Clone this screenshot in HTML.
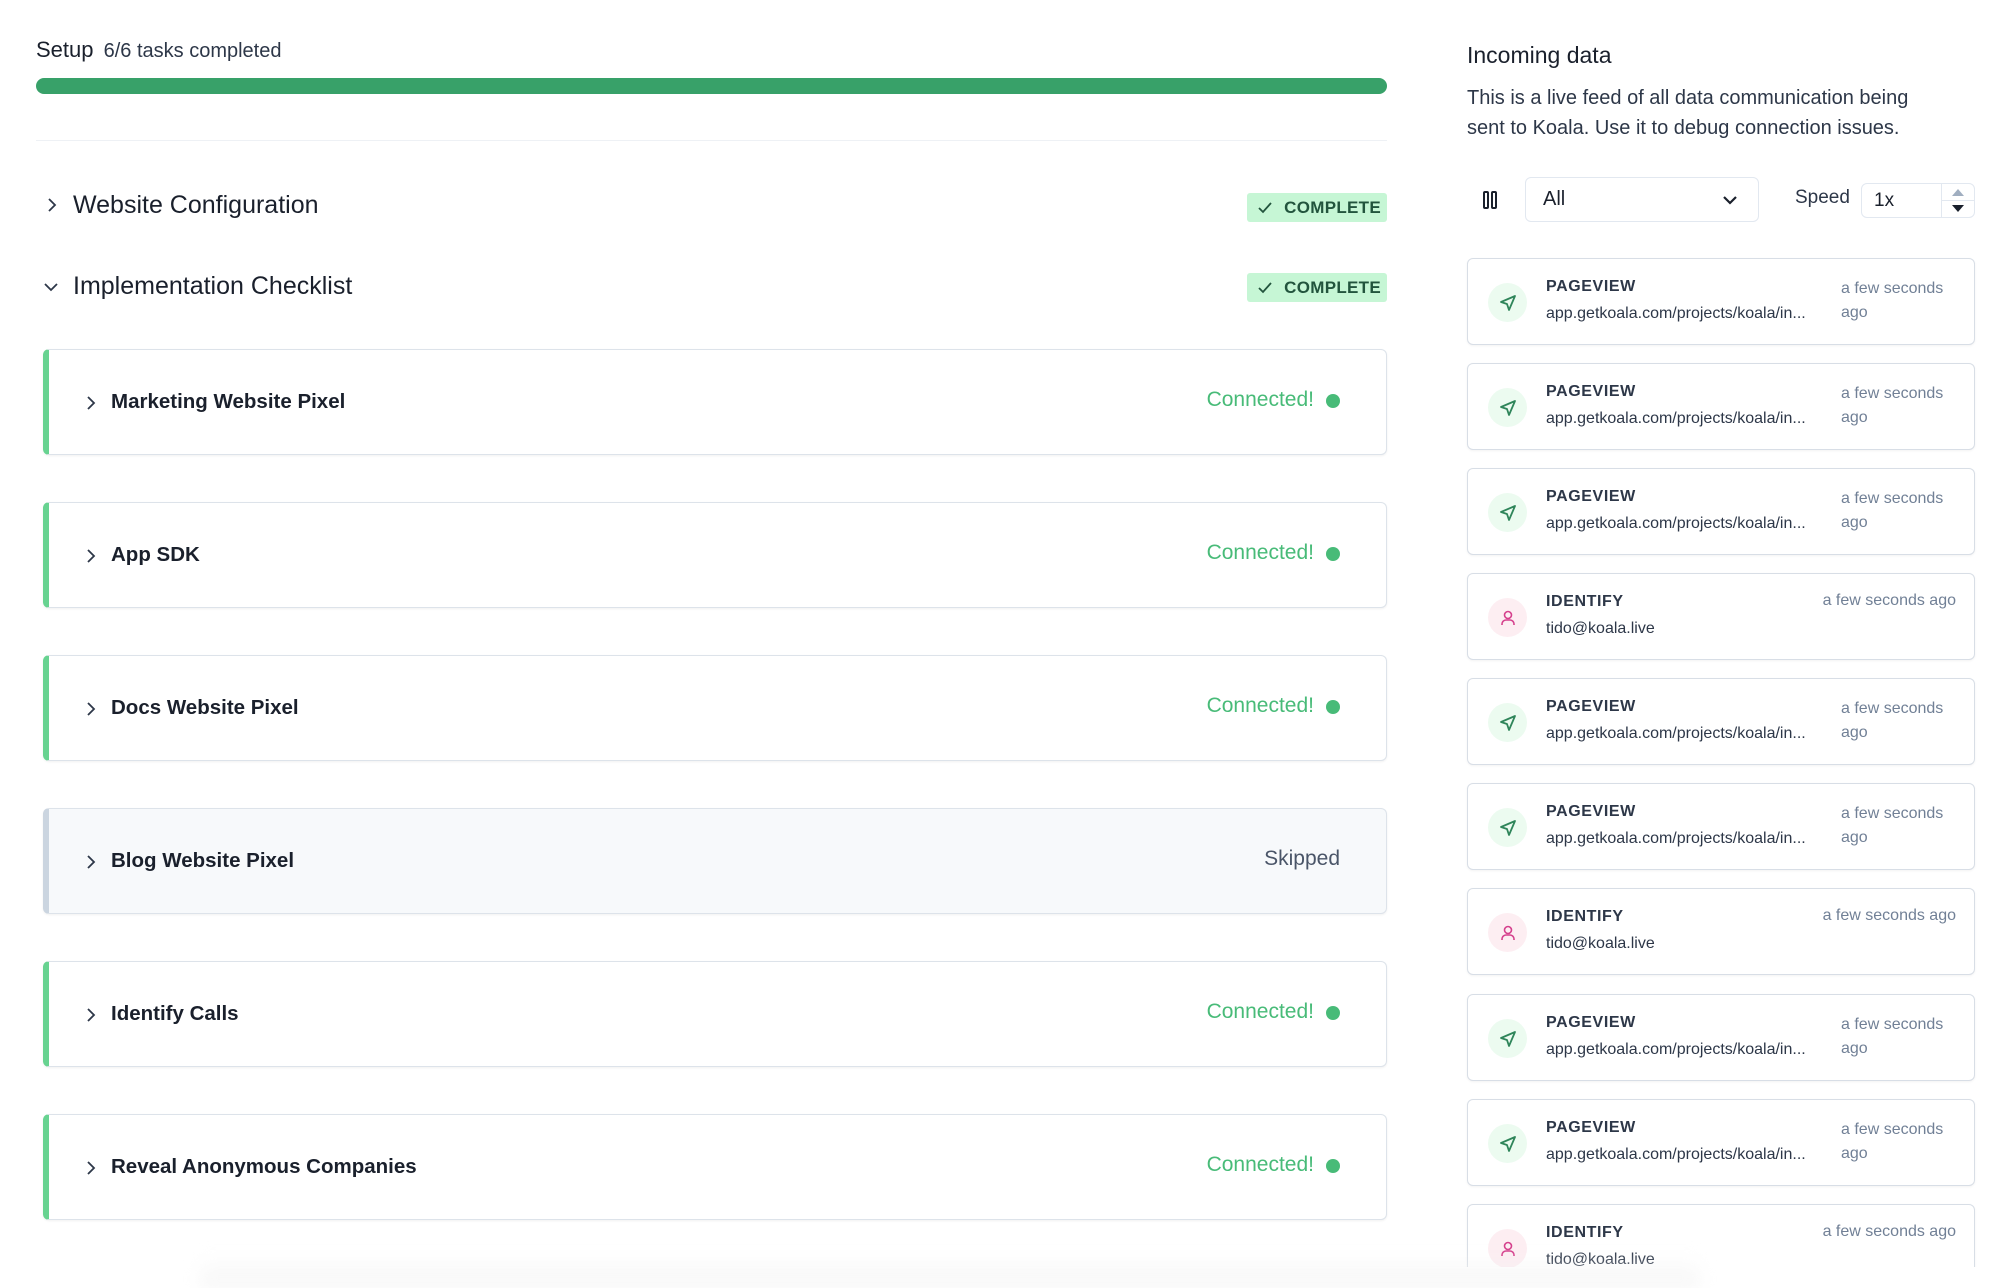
<!DOCTYPE html>
<html><head><meta charset="utf-8"><style>
*{box-sizing:border-box;margin:0;padding:0}
body{width:1999px;height:1288px;background:#fff;font-family:"Liberation Sans",Arial,sans-serif;color:#1a202c;position:relative;overflow:hidden}
.a{position:absolute}
.badge{position:absolute;left:1247px;width:140px;height:29px;background:#c6f6d5;border-radius:3px;color:#22543d;font-weight:bold;font-size:17px;display:flex;align-items:center;justify-content:flex-end;padding-right:6px;letter-spacing:.3px}
.badge svg{position:absolute;left:10px;top:8px}
.card{position:absolute;left:43px;width:1344px;height:106px;border:1px solid #dde3ea;border-left:6px solid #68d391;border-radius:6px;box-shadow:0 1px 2px rgba(0,0,0,.06);background:#fff}
.card.sk{background:#f7f9fb;border-left-color:#cbd5e0}
.card .t{position:absolute;left:62px;top:0;line-height:104px;font-weight:bold;font-size:20.5px;color:#1a202c}
.card .ch{position:absolute;left:36px;top:45px}
.card .c{position:absolute;right:72px;top:0;line-height:100px;font-size:21px;color:#48bb78}
.card .d{position:absolute;right:46px;top:44px;width:14px;height:14px;border-radius:50%;background:#48bb78}
.card .s{position:absolute;right:46px;top:0;line-height:100px;font-size:21px;color:#4a5568}
.f{position:absolute;left:1467px;width:508px;height:87px;border:1px solid #d8dee6;border-radius:6px;background:#fff;box-shadow:0 1px 2px rgba(0,0,0,.05)}
.f .ic{position:absolute;left:20px;top:24px;width:39px;height:39px;border-radius:50%;background:#ecfbf0;display:flex;align-items:center;justify-content:center}
.f .ic.p{background:#fdeef2}
.f .k{position:absolute;left:78px;top:19px;font-size:16px;font-weight:bold;color:#2d3748;letter-spacing:.6px}
.f .u{position:absolute;left:78px;top:46px;font-size:16px;color:#2d3748}
.f .tm{position:absolute;left:373px;top:18px;font-size:16px;color:#718096;line-height:24px}
.f .tm2{position:absolute;right:18px;top:18px;font-size:16px;color:#718096}
</style></head><body>
<div class="a" style="left:36px;top:37px;font-size:22px;color:#1a202c">Setup <span style="font-size:20px;color:#2d3748;margin-left:4px">6/6 tasks completed</span></div>
<div class="a" style="left:36px;top:78px;width:1351px;height:16px;border-radius:8px;background:#38a169"></div>
<div class="a" style="left:36px;top:140px;width:1351px;height:1px;background:#eef1f5"></div>

<svg class="a" style="left:45px;top:197px" width="14" height="16" viewBox="0 0 14 16"><path d="M4 2l6 6-6 6" fill="none" stroke="#2d3748" stroke-width="1.8"/></svg>
<div class="a" style="left:73px;top:191px;font-size:25px;color:#1a202c">Website Configuration</div>
<div class="badge" style="top:193px"><svg width="16" height="13" viewBox="0 0 16 13"><path d="M2 7l4 4 8-9" fill="none" stroke="#22543d" stroke-width="1.8"/></svg>COMPLETE</div>

<svg class="a" style="left:43px;top:280px" width="16" height="14" viewBox="0 0 16 14"><path d="M2 4l6 6 6-6" fill="none" stroke="#2d3748" stroke-width="1.8"/></svg>
<div class="a" style="left:73px;top:272px;font-size:25px;color:#1a202c">Implementation Checklist</div>
<div class="badge" style="top:273px"><svg width="16" height="13" viewBox="0 0 16 13"><path d="M2 7l4 4 8-9" fill="none" stroke="#22543d" stroke-width="1.8"/></svg>COMPLETE</div>

<div class="card" style="top:349px"><svg class="ch" width="12" height="16" viewBox="0 0 12 16"><path d="M3 2l6 6-6 6" fill="none" stroke="#2d3748" stroke-width="1.8"/></svg><div class="t">Marketing Website Pixel</div><div class="c">Connected!</div><div class="d"></div></div>
<div class="card" style="top:502px"><svg class="ch" width="12" height="16" viewBox="0 0 12 16"><path d="M3 2l6 6-6 6" fill="none" stroke="#2d3748" stroke-width="1.8"/></svg><div class="t">App SDK</div><div class="c">Connected!</div><div class="d"></div></div>
<div class="card" style="top:655px"><svg class="ch" width="12" height="16" viewBox="0 0 12 16"><path d="M3 2l6 6-6 6" fill="none" stroke="#2d3748" stroke-width="1.8"/></svg><div class="t">Docs Website Pixel</div><div class="c">Connected!</div><div class="d"></div></div>
<div class="card sk" style="top:808px"><svg class="ch" width="12" height="16" viewBox="0 0 12 16"><path d="M3 2l6 6-6 6" fill="none" stroke="#2d3748" stroke-width="1.8"/></svg><div class="t">Blog Website Pixel</div><div class="s">Skipped</div></div>
<div class="card" style="top:961px"><svg class="ch" width="12" height="16" viewBox="0 0 12 16"><path d="M3 2l6 6-6 6" fill="none" stroke="#2d3748" stroke-width="1.8"/></svg><div class="t">Identify Calls</div><div class="c">Connected!</div><div class="d"></div></div>
<div class="card" style="top:1114px"><svg class="ch" width="12" height="16" viewBox="0 0 12 16"><path d="M3 2l6 6-6 6" fill="none" stroke="#2d3748" stroke-width="1.8"/></svg><div class="t">Reveal Anonymous Companies</div><div class="c">Connected!</div><div class="d"></div></div>

<div class="a" style="left:1467px;top:42px;font-size:23px;color:#1a202c">Incoming data</div>
<div class="a" style="left:1467px;top:83px;width:470px;font-size:20px;line-height:30px;color:#2d3748">This is a live feed of all data communication being sent to Koala. Use it to debug connection issues.</div>

<svg class="a" style="left:1482px;top:190px" width="16" height="20" viewBox="0 0 16 20"><rect x="2" y="2" width="4" height="16" rx="1" fill="none" stroke="#1a202c" stroke-width="2"/><rect x="10" y="2" width="4" height="16" rx="1" fill="none" stroke="#1a202c" stroke-width="2"/></svg>
<div class="a" style="left:1525px;top:177px;width:234px;height:45px;border:1px solid #e2e8f0;border-radius:6px;font-size:20px;line-height:43px;padding-left:17px;color:#1a202c">All
<svg style="position:absolute;right:20px;top:16px" width="16" height="12" viewBox="0 0 16 12"><path d="M2 3l6 6 6-6" fill="none" stroke="#1a202c" stroke-width="2.2"/></svg></div>
<div class="a" style="left:1795px;top:187px;font-size:19px;color:#2d3748">Speed</div>
<div class="a" style="left:1861px;top:183px;width:114px;height:35px;border:1px solid #e2e8f0;border-radius:6px;font-size:19px;line-height:33px;padding-left:12px;color:#1a202c">1x
<div style="position:absolute;right:0;top:0;width:33px;height:33px;border-left:1px solid #e2e8f0"><div style="position:absolute;left:10px;top:5px;border:6px solid transparent;border-bottom:7px solid #a0aec0;border-top:0"></div><div style="position:absolute;left:0;right:0;top:16px;height:1px;background:#e2e8f0"></div><div style="position:absolute;left:10px;top:21px;border:6px solid transparent;border-top:7px solid #1a202c;border-bottom:0"></div></div></div>

<div style="position:absolute;left:0;top:0;width:1999px;height:1267px;overflow:hidden">
<div class="f" style="top:258px"><div class="ic"><svg width="20" height="20" viewBox="0 0 20 20"><path d="M17 3L3 9l6 2 2 6z" fill="none" stroke="#2f855a" stroke-width="1.8" stroke-linejoin="round"/></svg></div><div class="k">PAGEVIEW</div><div class="u">app.getkoala.com/projects/koala/in...</div><div class="tm">a few seconds<br>ago</div></div>
<div class="f" style="top:363px"><div class="ic"><svg width="20" height="20" viewBox="0 0 20 20"><path d="M17 3L3 9l6 2 2 6z" fill="none" stroke="#2f855a" stroke-width="1.8" stroke-linejoin="round"/></svg></div><div class="k">PAGEVIEW</div><div class="u">app.getkoala.com/projects/koala/in...</div><div class="tm">a few seconds<br>ago</div></div>
<div class="f" style="top:468px"><div class="ic"><svg width="20" height="20" viewBox="0 0 20 20"><path d="M17 3L3 9l6 2 2 6z" fill="none" stroke="#2f855a" stroke-width="1.8" stroke-linejoin="round"/></svg></div><div class="k">PAGEVIEW</div><div class="u">app.getkoala.com/projects/koala/in...</div><div class="tm">a few seconds<br>ago</div></div>
<div class="f" style="top:573px"><div class="ic p"><svg width="20" height="20" viewBox="0 0 20 20"><circle cx="10" cy="7" r="3.5" fill="none" stroke="#d53f8c" stroke-width="1.6"/><path d="M4 17v-1a4 4 0 0 1 4-4h4a4 4 0 0 1 4 4v1" fill="none" stroke="#d53f8c" stroke-width="1.6"/></svg></div><div class="k">IDENTIFY</div><div class="u">tido@koala.live</div><div class="tm2">a few seconds ago</div></div>
<div class="f" style="top:678px"><div class="ic"><svg width="20" height="20" viewBox="0 0 20 20"><path d="M17 3L3 9l6 2 2 6z" fill="none" stroke="#2f855a" stroke-width="1.8" stroke-linejoin="round"/></svg></div><div class="k">PAGEVIEW</div><div class="u">app.getkoala.com/projects/koala/in...</div><div class="tm">a few seconds<br>ago</div></div>
<div class="f" style="top:783px"><div class="ic"><svg width="20" height="20" viewBox="0 0 20 20"><path d="M17 3L3 9l6 2 2 6z" fill="none" stroke="#2f855a" stroke-width="1.8" stroke-linejoin="round"/></svg></div><div class="k">PAGEVIEW</div><div class="u">app.getkoala.com/projects/koala/in...</div><div class="tm">a few seconds<br>ago</div></div>
<div class="f" style="top:888px"><div class="ic p"><svg width="20" height="20" viewBox="0 0 20 20"><circle cx="10" cy="7" r="3.5" fill="none" stroke="#d53f8c" stroke-width="1.6"/><path d="M4 17v-1a4 4 0 0 1 4-4h4a4 4 0 0 1 4 4v1" fill="none" stroke="#d53f8c" stroke-width="1.6"/></svg></div><div class="k">IDENTIFY</div><div class="u">tido@koala.live</div><div class="tm2">a few seconds ago</div></div>
<div class="f" style="top:994px"><div class="ic"><svg width="20" height="20" viewBox="0 0 20 20"><path d="M17 3L3 9l6 2 2 6z" fill="none" stroke="#2f855a" stroke-width="1.8" stroke-linejoin="round"/></svg></div><div class="k">PAGEVIEW</div><div class="u">app.getkoala.com/projects/koala/in...</div><div class="tm">a few seconds<br>ago</div></div>
<div class="f" style="top:1099px"><div class="ic"><svg width="20" height="20" viewBox="0 0 20 20"><path d="M17 3L3 9l6 2 2 6z" fill="none" stroke="#2f855a" stroke-width="1.8" stroke-linejoin="round"/></svg></div><div class="k">PAGEVIEW</div><div class="u">app.getkoala.com/projects/koala/in...</div><div class="tm">a few seconds<br>ago</div></div>
<div class="f" style="top:1204px"><div class="ic p"><svg width="20" height="20" viewBox="0 0 20 20"><circle cx="10" cy="7" r="3.5" fill="none" stroke="#d53f8c" stroke-width="1.6"/><path d="M4 17v-1a4 4 0 0 1 4-4h4a4 4 0 0 1 4 4v1" fill="none" stroke="#d53f8c" stroke-width="1.6"/></svg></div><div class="k">IDENTIFY</div><div class="u">tido@koala.live</div><div class="tm2">a few seconds ago</div></div>
</div>
<div class="a" style="left:200px;top:1255px;width:1500px;height:33px;background:linear-gradient(to bottom,rgba(245,245,245,0),rgba(243,243,243,.8));filter:blur(8px)"></div>
</body></html>
